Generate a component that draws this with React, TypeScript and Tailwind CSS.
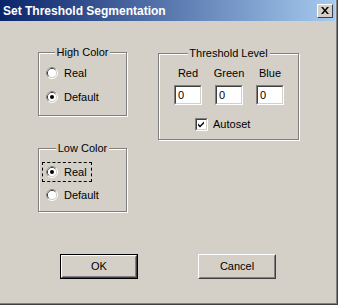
import React from 'react';

const Radio: React.FC<{ checked?: boolean }> = ({ checked }) => (
  <svg width="12" height="12" viewBox="0 0 12 12" className="shrink-0">
    <circle cx="6" cy="6" r="5.5" fill="none" stroke="#ffffff" />
    <path d="M2.11 9.89 A5.5 5.5 0 0 1 9.89 2.11" fill="none" stroke="#808080" />
    <circle cx="6" cy="6" r="4.5" fill="none" stroke="#D4D0C8" />
    <path d="M2.82 9.18 A4.5 4.5 0 0 1 9.18 2.82" fill="none" stroke="#404040" />
    <circle cx="6" cy="6" r="4" fill="#ffffff" />
    {checked && <circle cx="6" cy="6" r="2" fill="#000000" />}
  </svg>
);

const Group: React.FC<{ label: string; className?: string; children: React.ReactNode }> = ({ label, className, children }) => (
  <div className={`relative border border-[#808080] shadow-[inset_1px_1px_0_#ffffff,1px_1px_0_#ffffff] ${className ?? ''}`}>
    <span className="absolute left-1/2 -translate-x-1/2 -top-[7px] bg-[#D4D0C8] px-[2px] leading-[13px] whitespace-nowrap">
      {label}
    </span>
    {children}
  </div>
);

const Sunken: React.FC<{ className?: string; children?: React.ReactNode }> = ({ className, children }) => (
  <div className={`border border-t-[#808080] border-l-[#808080] border-b-white border-r-white ${className ?? ''}`}>
    <div className="w-full h-full bg-white border border-t-[#404040] border-l-[#404040] border-b-[#D4D0C8] border-r-[#D4D0C8]">
      {children}
    </div>
  </div>
);

const Button: React.FC<{ label: string; isDefault?: boolean }> = ({ label, isDefault }) => (
  <div className={`w-[78px] h-[25px] ${isDefault ? 'border border-black' : ''}`}>
    <div className="w-full h-full border border-t-white border-l-white border-b-[#404040] border-r-[#404040]">
      <div className="w-full h-full border border-t-[#D4D0C8] border-l-[#D4D0C8] border-b-[#808080] border-r-[#808080] flex items-center justify-center">
        {label}
      </div>
    </div>
  </div>
);

export default function App() {
  return (
    <div className="w-[338px] h-[305px] bg-[#D4D0C8] shadow-[inset_-1px_-1px_0_#404040,inset_-2px_-2px_0_#808080] flex flex-col font-['Liberation_Sans',Arial,sans-serif] text-[11px] text-black">
      {/* title bar */}
      <div className="w-[335px] h-[21px] shrink-0 flex items-center justify-between pl-[3px] pr-[2px] bg-[linear-gradient(to_right,#0A246A,#A6CAF0)]">
        <span className="text-white font-bold text-[12px] leading-none">Set Threshold Segmentation</span>
        <div className="w-[16px] h-[14px] border border-t-white border-l-white border-b-[#404040] border-r-[#404040] bg-[#D4D0C8] flex items-center justify-center">
          <svg width="8" height="7" viewBox="0 0 8 7">
            <path d="M0 0h2l2 2.5L6 0h2L5 3.5 8 7H6L4 4.5 2 7H0l3-3.5z" fill="#000" />
          </svg>
        </div>
      </div>

      <div className="pl-[38px] pt-[31px]">
        <div className="flex items-start gap-[31px]">
          <div className="w-[89px] flex flex-col gap-[32px]">
            <Group label="High Color" className="h-[64px] pt-[14px] pl-[7px]">
              <div className="flex flex-col gap-[12px]">
                <div className="flex items-center gap-[6px] h-[12px]">
                  <Radio />
                  <span>Real</span>
                </div>
                <div className="flex items-center gap-[6px] h-[12px]">
                  <Radio checked />
                  <span>Default</span>
                </div>
              </div>
            </Group>

            <Group label="Low Color" className="h-[64px] pt-[13px] pl-[3px]">
              <div className="w-[50px] h-[20px] border border-dashed border-black flex items-center gap-[6px] pl-[3px]">
                <Radio checked />
                <span>Real</span>
              </div>
              <div className="flex items-center gap-[6px] h-[12px] mt-[7px] pl-[4px]">
                <Radio />
                <span>Default</span>
              </div>
            </Group>
          </div>

          <Group label="Threshold Level" className="mt-[1px] w-[141px] h-[87px] pt-[13px]">
            <div className="flex pl-[15px] gap-[13px]">
              {['Red', 'Green', 'Blue'].map((c) => (
                <div key={c} className="flex flex-col items-center gap-[5px] w-[28px]">
                  <span className="leading-[13px]">{c}</span>
                  <Sunken className="w-[28px] h-[20px]">
                    <div className="pl-[2px] leading-[16px]">0</div>
                  </Sunken>
                </div>
              ))}
            </div>
            <div className="flex items-center gap-[5px] pl-[36px] mt-[11px]">
              <Sunken className="w-[13px] h-[13px]">
                <svg width="9" height="9" viewBox="0 0 9 9" className="block">
                  <path d="M1 3.5l2 2 4-4v2l-4 4-2-2z" fill="#000" />
                </svg>
              </Sunken>
              <span>Autoset</span>
            </div>
          </Group>
        </div>

        <div className="flex gap-[60px] pl-[22px] mt-[42px]">
          <Button label="OK" isDefault />
          <Button label="Cancel" />
        </div>
      </div>
    </div>
  );
}
